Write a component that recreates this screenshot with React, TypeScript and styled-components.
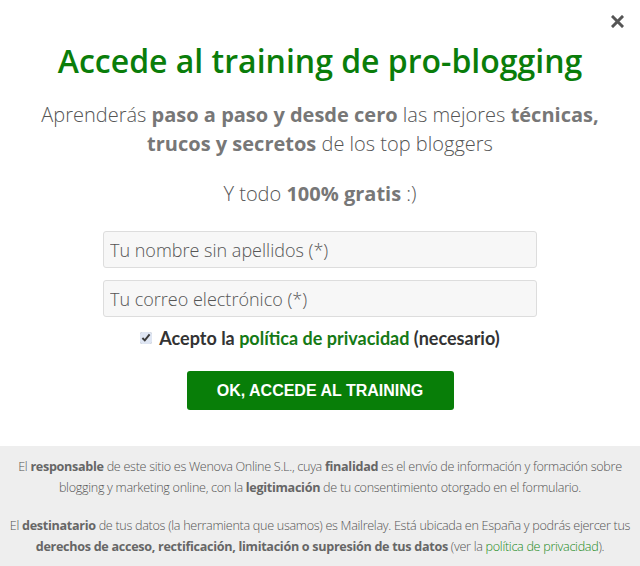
import React from "react";
import styled, { createGlobalStyle } from "styled-components";

const GlobalStyle = createGlobalStyle`
    html, body {
        margin: 0;
        padding: 0;
        background: #fff;
    }
    body {
        font-family: "Open Sans", "Liberation Sans", sans-serif;
    }
`;

const Popup = styled.div`
    width: 640px;
    height: 566px;
    display: flex;
    flex-direction: column;
    position: relative;
    overflow: hidden;
`;

const Close = styled.button`
    position: absolute;
    top: 12px;
    right: 14px;
    border: 0;
    background: none;
    padding: 0;
    width: 18px;
    height: 18px;
    display: flex;
    align-items: center;
    justify-content: center;
    cursor: pointer;
`;

const Main = styled.div`
    flex: 1;
    display: flex;
    flex-direction: column;
    align-items: center;
    padding-top: 39px;
`;

const Title = styled.h1`
    margin: 0;
    font-family: "Open Sans", sans-serif;
    font-weight: 600;
    font-size: 32px;
    line-height: 44px;
    color: #0a7d0a;
    text-align: center;
`;

const Lead = styled.p<{ $gap?: number }>`
    margin: ${(p) => p.$gap ?? 0}px 0 0;
    font-family: "Open Sans", sans-serif;
    font-weight: 300;
    font-size: 20px;
    line-height: 29px;
    color: #555;
    text-align: center;
    b {
        font-weight: 700;
        color: #777;
    }
`;

const Form = styled.form`
    margin-top: 23px;
    width: 434px;
    display: flex;
    flex-direction: column;
    align-items: center;
    gap: 12px;
`;

const Field = styled.input`
    box-sizing: border-box;
    width: 100%;
    height: 37px;
    margin: 0;
    padding: 0 6px;
    border: 1px solid #ddd;
    border-radius: 3px;
    background: #f7f7f7;
    font-family: "Open Sans", sans-serif;
    font-weight: 300;
    font-size: 18px;
    color: #555;
    &::placeholder {
        color: #555;
        opacity: 1;
    }
`;

const Consent = styled.label`
    display: flex;
    align-items: center;
    gap: 7px;
    margin-top: -2px;
    font-family: Lato, "Liberation Sans", sans-serif;
    font-weight: 700;
    font-size: 18px;
    color: #333;
    input {
        margin: 0;
        width: 12px;
        height: 12px;
        accent-color: #dfe6f3;
    }
    a {
        color: #157a15;
        text-decoration: none;
    }
`;

const Submit = styled.button`
    margin-top: 10px;
    width: 267px;
    height: 39px;
    border: 0;
    border-radius: 3px;
    background: #087e08;
    color: #fff;
    font-family: "Liberation Sans", Arial, sans-serif;
    font-weight: 700;
    font-size: 16px;
    cursor: pointer;
`;

const Legal = styled.div`
    height: 120px;
    box-sizing: border-box;
    background: #eeeeee;
    padding: 10px 6px 0;
    display: flex;
    flex-direction: column;
    gap: 17px;
`;

const LegalText = styled.p`
    margin: 0;
    font-family: "Open Sans", sans-serif;
    font-weight: 300;
    font-size: 12.6px;
    line-height: 21px;
    letter-spacing: -0.3px;
    color: #555;
    text-align: center;
    b {
        font-weight: 700;
        color: #666;
    }
    a {
        color: #1a8a1a;
        text-decoration: none;
    }
`;

export default function App() {
    return (
        <>
            <GlobalStyle />
            <Popup>
                <Close aria-label="Cerrar">
                    <svg width="13" height="13" viewBox="0 0 13 13">
                        <path d="M2 2 L11 11 M11 2 L2 11" stroke="#555" strokeWidth="3" strokeLinecap="square" />
                    </svg>
                </Close>
                <Main>
                    <Title>Accede al training de pro-blogging</Title>
                    <Lead $gap={17}>
                        Aprenderás <b>paso a paso y desde cero</b> las mejores <b>técnicas,</b>
                        <br />
                        <b>trucos y secretos</b> de los top bloggers
                    </Lead>
                    <Lead $gap={21}>
                        Y todo <b>100% gratis</b> :)
                    </Lead>
                    <Form onSubmit={(e) => e.preventDefault()}>
                        <Field type="text" placeholder="Tu nombre sin apellidos (*)" />
                        <Field type="email" placeholder="Tu correo electrónico (*)" />
                        <Consent>
                            <input type="checkbox" defaultChecked />
                            <span>
                                Acepto la <a href="#">política de privacidad</a> (necesario)
                            </span>
                        </Consent>
                        <Submit type="submit">OK, ACCEDE AL TRAINING</Submit>
                    </Form>
                </Main>
                <Legal>
                    <LegalText>
                        El <b>responsable</b> de este sitio es Wenova Online S.L., cuya <b>finalidad</b> es el envío de
                        información y formación sobre blogging y marketing online, con la <b>legitimación</b> de tu
                        consentimiento otorgado en el formulario.
                    </LegalText>
                    <LegalText>
                        El <b>destinatario</b> de tus datos (la herramienta que usamos) es Mailrelay. Está ubicada en
                        España y podrás ejercer tus <b>derechos de acceso, rectificación, limitación o supresión de tus
                        datos</b> (ver la <a href="#">política de privacidad</a>).
                    </LegalText>
                </Legal>
            </Popup>
        </>
    );
}
